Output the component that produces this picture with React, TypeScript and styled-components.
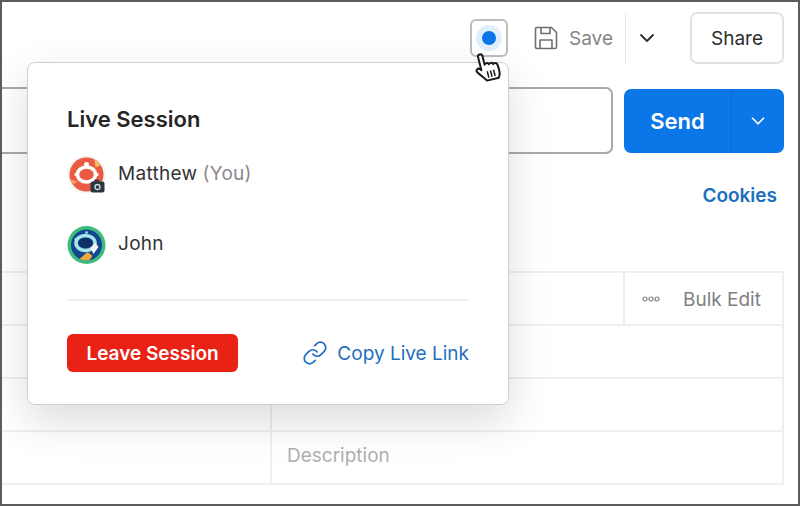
import React from 'react'
import styled, { createGlobalStyle } from 'styled-components'
import { ChevronDown, Link } from 'lucide-react'

const Global = createGlobalStyle`
  * { box-sizing: border-box; }
  html, body { margin: 0; padding: 0; background: #fff; }
  body { font-family: Inter, "Noto Sans", sans-serif; }
`

const Frame = styled.div`
  position: relative;
  width: 800px;
  height: 506px;
  overflow: hidden;
  background: #fff;
  border: 2px solid #5c5c5c;
  padding-right: 14px;
`

const Toolbar = styled.header`
  display: flex;
  align-items: center;
  justify-content: flex-end;
  height: 52px;
  margin-top: 10px;
`

const RecordButton = styled.button`
  display: flex;
  align-items: center;
  justify-content: center;
  width: 38px;
  height: 38px;
  padding: 0;
  margin-right: 26px;
  background: #fff;
  border: 2px solid #bdbdbd;
  border-radius: 6px;
`

const Pulse = styled.span`
  width: 14px;
  height: 14px;
  border-radius: 50%;
  background: #0b76e8;
  box-shadow: 0 0 0 6px #e1effc;
`

const SaveAction = styled.div`
  display: flex;
  align-items: center;
  gap: 11px;
  font-size: 19px;
  color: #858585;
  padding-right: 12px;
`

const MoreToggle = styled.div`
  display: flex;
  align-items: center;
  justify-content: center;
  width: 42px;
  height: 50px;
  margin-right: 23px;
  border-left: 1px solid #e6e6e6;
  color: #2b2b2b;
`

const ShareButton = styled.button`
  width: 94px;
  height: 52px;
  padding: 0;
  background: #fff;
  border: 2px solid #e2e2e2;
  border-radius: 7px;
  font: 400 19px Inter, sans-serif;
  color: #2e2e2e;
`

const RequestRow = styled.div`
  display: flex;
  align-items: flex-start;
  gap: 11px;
  height: 67px;
  margin-top: 23px;
`

const UrlInput = styled.div`
  flex: 1;
  height: 67px;
  margin-left: -10px;
  border: 2px solid #a9a9a9;
  border-radius: 7px;
`

const SendGroup = styled.div`
  display: flex;
  width: 160px;
  height: 64px;
  margin-top: 2px;
  border-radius: 7px;
  overflow: hidden;
  background: #0b76e8;
  color: #fff;
`

const SendLabel = styled.div`
  display: flex;
  align-items: center;
  justify-content: center;
  width: 107px;
  font-size: 22px;
  font-weight: 600;
`

const SendToggle = styled.div`
  display: flex;
  align-items: center;
  justify-content: center;
  flex: 1;
  border-left: 1px solid #0a69cf;
`

const TabsRow = styled.div`
  display: flex;
  justify-content: flex-end;
  height: 117px;
  padding: 31px 7px 0 0;
`

const CookiesLink = styled.a`
  font-size: 19px;
  line-height: 22px;
  font-weight: 600;
  color: #1a6fc0;
`

const Table = styled.div`
  display: flex;
  flex-direction: column;
  border-top: 2px solid #efefef;
  border-right: 2px solid #efefef;
`

const Row = styled.div<{ $columns: string }>`
  display: grid;
  grid-template-columns: ${p => p.$columns};
  height: 53px;
  border-bottom: 2px solid #efefef;
`

const Cell = styled.div`
  display: flex;
  align-items: center;
  gap: 23px;
  padding-left: 15px;
  font-size: 19px;
  color: #b0b0b0;
  & + & { border-left: 2px solid #efefef; }
`

const BulkCell = styled(Cell)`
  padding: 1px 0 0 17px;
  color: #808080;
`

const PlaceholderCell = styled(Cell)`
  padding-bottom: 4px;
`

const Popover = styled.section`
  position: absolute;
  left: 25px;
  top: 60px;
  width: 482px;
  height: 343px;
  padding: 41px 39px 0;
  background: #fff;
  border: 1px solid #cfcfcf;
  border-radius: 8px;
  box-shadow: 0 16px 44px rgba(0, 0, 0, 0.14);
`

const Title = styled.h2`
  margin: 0;
  font-size: 22px;
  line-height: 30px;
  font-weight: 600;
  color: #262626;
`

const Members = styled.ul`
  display: flex;
  flex-direction: column;
  gap: 30px;
  margin: 19px 0 0;
  padding: 0;
  list-style: none;
`

const Member = styled.li`
  display: flex;
  align-items: center;
  gap: 11px;
  height: 40px;
  font-size: 19px;
  letter-spacing: 0.3px;
  color: #333;
  svg { margin-top: 4px; }
`

const You = styled.span`
  margin-left: 5px;
  color: #8a8a8a;
`

const Divider = styled.hr`
  margin: 36px 0 0;
  border: 0;
  border-top: 2px solid #f0f0f0;
`

const Footer = styled.div`
  display: flex;
  align-items: center;
  justify-content: space-between;
  margin-top: 33px;
`

const LeaveButton = styled.button`
  width: 171px;
  height: 38px;
  padding: 0;
  border: 0;
  border-radius: 6px;
  background: #ea2115;
  color: #fff;
  font: 600 19px Inter, sans-serif;
`

const CopyLink = styled.a`
  display: flex;
  align-items: center;
  gap: 9px;
  font-size: 19px;
  color: #1f6fbd;
`

const Cursor = styled.svg`
  position: absolute;
  left: 470px;
  top: 46px;
`

const SaveIcon = () => (
  <svg width="24" height="24" viewBox="0 0 24 24" fill="none" stroke="#6f6f6f" strokeWidth="1.6" strokeLinejoin="round">
    <path d="M1.500 3A1.500 1.500 0 0 1 3 1.500h14.500l5 5V21a1.500 1.500 0 0 1-1.500 1.500H3A1.500 1.500 0 0 1 1.500 21z" />
    <path d="M7 1.500v6h9v-6M6 22.500V14h12v8.500" />
  </svg>
)

const DotsIcon = () => (
  <svg width="18" height="6" viewBox="0 0 18 6" fill="none" stroke="#808080" strokeWidth="1.200">
    <circle cx="3" cy="3" r="2" />
    <circle cx="9" cy="3" r="2" />
    <circle cx="15" cy="3" r="2" />
  </svg>
)

const MatthewAvatar = () => (
  <svg width="40" height="40" viewBox="0 0 40 40">
    <circle cx="19.500" cy="19.500" r="19" fill="#f4f2f1" />
    <circle cx="19.500" cy="19.500" r="17" fill="#ea5b43" />
    <path d="M27.500 4.500a17 17 0 0 1 6 6l-5 2z" fill="#f4bb62" />
    <path d="M3.500 24.500a17 17 0 0 0 3 5l4-3z" fill="#f4a35c" />
    <ellipse cx="19.500" cy="19.500" rx="9" ry="7.500" fill="none" stroke="#fff" strokeWidth="3.500" />
    <circle cx="19.500" cy="9.500" r="2.500" fill="#fff" />
    <path d="M7.500 19.500h3M28.500 19.500h3" stroke="#fff" strokeWidth="2.500" />
    <rect x="23.500" y="26.500" width="14" height="11" rx="2" fill="#2b3540" />
    <path d="M26.500 26.500l1.500-2h3.500l1.500 2z" fill="#2b3540" />
    <circle cx="30.500" cy="32" r="2.500" fill="none" stroke="#cfd6dc" strokeWidth="1.300" />
  </svg>
)

const JohnAvatar = () => (
  <svg width="40" height="40" viewBox="-0.500 -1 40 40">
    <circle cx="19" cy="19" r="19" fill="#3dbd7d" />
    <circle cx="19" cy="19" r="15.500" fill="#12488f" />
    <ellipse cx="18" cy="17" rx="9.500" ry="7.500" fill="none" stroke="#a6e6ea" strokeWidth="3.500" />
    <ellipse cx="18" cy="17" rx="7" ry="5" fill="#0e2f66" />
    <path d="M23 22l5-5 3 4-5 7z" fill="#f3f3f3" />
    <path d="M12 33l8-7 5 4-3 4a15 15 0 0 1-10-1z" fill="#f0a941" />
    <circle cx="19" cy="6.500" r="1.300" fill="#a6e6ea" />
    <circle cx="8" cy="13" r="1" fill="#a6e6ea" />
  </svg>
)

const App = () => (
  <Frame>
    <Global />
    <Toolbar>
      <RecordButton>
        <Pulse />
      </RecordButton>
      <SaveAction>
        <SaveIcon />
        Save
      </SaveAction>
      <MoreToggle>
        <ChevronDown size={24} strokeWidth={1.8} />
      </MoreToggle>
      <ShareButton>Share</ShareButton>
    </Toolbar>
    <RequestRow>
      <UrlInput />
      <SendGroup>
        <SendLabel>Send</SendLabel>
        <SendToggle>
          <ChevronDown size={22} strokeWidth={1.8} />
        </SendToggle>
      </SendGroup>
    </RequestRow>
    <TabsRow>
      <CookiesLink>Cookies</CookiesLink>
    </TabsRow>
    <Table>
      <Row $columns="621px 1fr">
        <Cell />
        <BulkCell>
          <DotsIcon />
          Bulk Edit
        </BulkCell>
      </Row>
      <Row $columns="268px 1fr">
        <Cell />
        <Cell />
      </Row>
      <Row $columns="268px 1fr">
        <Cell />
        <Cell />
      </Row>
      <Row $columns="268px 1fr">
        <Cell />
        <PlaceholderCell>Description</PlaceholderCell>
      </Row>
    </Table>
    <Popover>
      <Title>Live Session</Title>
      <Members>
        <Member>
          <MatthewAvatar />
          <span>
            Matthew<You>(You)</You>
          </span>
        </Member>
        <Member>
          <JohnAvatar />
          John
        </Member>
      </Members>
      <Divider />
      <Footer>
        <LeaveButton>Leave Session</LeaveButton>
        <CopyLink>
          <Link size={26} strokeWidth={1.6} />
          Copy Live Link
        </CopyLink>
      </Footer>
    </Popover>
    <Cursor width="34" height="38" viewBox="0 0 34 38">
      <g transform="rotate(-14 16 20)">
        <path
          d="M9 7c0-2.800 4.500-2.800 4.500 0v9c.5-1.500 4-1.500 4.300.6.500-1.400 4-1.200 4.200.9.600-1.200 3.800-.8 4 1.500l.4 5c.2 3.500-.8 6-2.200 8H12c-2-3.400-5.800-7.600-7.400-10.500-1.400-2.500 1.700-4.300 3.400-2.200l1 1.300z"
          fill="#fff"
          stroke="#1a1a1a"
          strokeWidth="2"
          strokeLinejoin="round"
        />
        <path d="M14.500 23v6.500M17.800 23v6.500M21 23v6.500" stroke="#1a1a1a" strokeWidth="1.500" />
      </g>
    </Cursor>
  </Frame>
)

export default App
